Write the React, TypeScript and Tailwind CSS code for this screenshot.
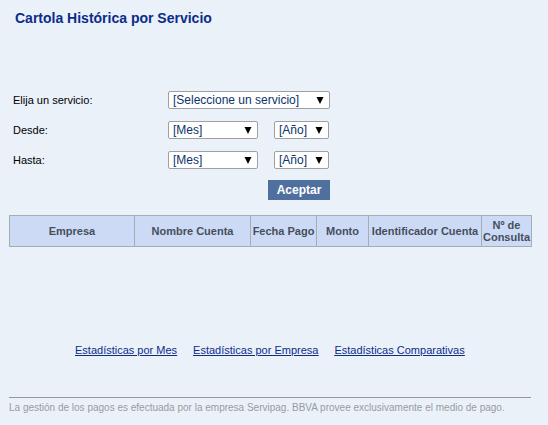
import type { ReactNode } from "react";

type PickerProps = {
  id: string;
  label: string;
  placeholder: string;
  className: string;
};

function Picker({ id, label, placeholder, className }: PickerProps) {
  return (
    <div className={`relative ${className}`}>
      <select
        id={id}
        aria-label={label}
        className="block h-[18px] w-full appearance-none rounded-xs border border-[#a0a0a0] bg-white pl-1 text-[12px] leading-4 text-[#0b3468]"
      >
        <option>{placeholder}</option>
      </select>
      <svg
        viewBox="0 0 8 7"
        className="pointer-events-none absolute top-[6px] right-[6px] h-[7px] w-2 fill-black"
        aria-hidden="true"
      >
        <path d="M0.5 0h7L4 7z" />
      </svg>
    </div>
  );
}

function FormRow({ id, label, children }: { id: string; label: string; children: ReactNode }) {
  return (
    <div className="flex h-[18px] items-center">
      <label htmlFor={id} className="w-[155px] text-black">
        {label}
      </label>
      <div className="flex w-[162px] gap-4">{children}</div>
    </div>
  );
}

const columns = [
  { name: "Empresa", width: "w-[125px]" },
  { name: "Nombre Cuenta", width: "w-[116px]" },
  { name: "Fecha Pago", width: "w-[66px]" },
  { name: "Monto", width: "w-[52px]" },
  { name: "Identificador Cuenta", width: "w-[113px]" },
  { name: "Nº de Consulta", width: "w-[50px]" },
];

export default function App() {
  return (
    <main className="min-h-screen bg-[#eaf1f9] pt-[10px] pr-[17px] pb-[9px] pl-[9px] font-['Liberation_Sans',Arial,sans-serif] text-[11px] leading-3">
      <h1 className="pl-[6px] text-[14px] leading-4 font-bold text-[#0c2c8a]">
        Cartola Histórica por Servicio
      </h1>

      <form className="mt-[65px] pl-1" onSubmit={(e) => e.preventDefault()}>
        <div className="flex flex-col gap-3">
          <FormRow id="servicio" label="Elija un servicio:">
            <Picker id="servicio" label="Servicio" placeholder="[Seleccione un servicio]" className="w-full" />
          </FormRow>
          <FormRow id="desde-mes" label="Desde:">
            <Picker id="desde-mes" label="Desde, mes" placeholder="[Mes]" className="w-[90px]" />
            <Picker id="desde-ano" label="Desde, año" placeholder="[Año]" className="w-[55px]" />
          </FormRow>
          <FormRow id="hasta-mes" label="Hasta:">
            <Picker id="hasta-mes" label="Hasta, mes" placeholder="[Mes]" className="w-[90px]" />
            <Picker id="hasta-ano" label="Hasta, año" placeholder="[Año]" className="w-[55px]" />
          </FormRow>
        </div>
        <div className="mt-[11px] flex w-[317px] justify-end">
          <button type="submit" className="h-5 w-[62px] bg-[#4f709f] text-[12px] font-bold text-white">
            Aceptar
          </button>
        </div>
      </form>

      <table className="mt-[15px] w-full table-fixed border-collapse bg-[#cddaf5] text-[#454f5c]">
        <thead>
          <tr className="h-[31px]">
            {columns.map((column) => (
              <th
                key={column.name}
                scope="col"
                className={`border border-[#a2b0b2] p-0 text-center align-middle font-bold ${column.width}`}
              >
                {column.name}
              </th>
            ))}
          </tr>
        </thead>
      </table>

      <nav className="mt-[97px] flex pl-[66px] text-[#0c2c8a] underline">
        <a href="#mes">Estadísticas por Mes</a>
        <a href="#empresa" className="ml-4">
          Estadísticas por Empresa
        </a>
        <a href="#comparativas" className="ml-4">
          Estadísticas Comparativas
        </a>
      </nav>

      <footer className="mt-[41px] border-t border-[#9698a0] pt-1 text-[10px] leading-3 text-[#999ca0]">
        La gestión de los pagos es efectuada por la empresa Servipag. BBVA provee exclusivamente el medio de pago.
      </footer>
    </main>
  );
}
